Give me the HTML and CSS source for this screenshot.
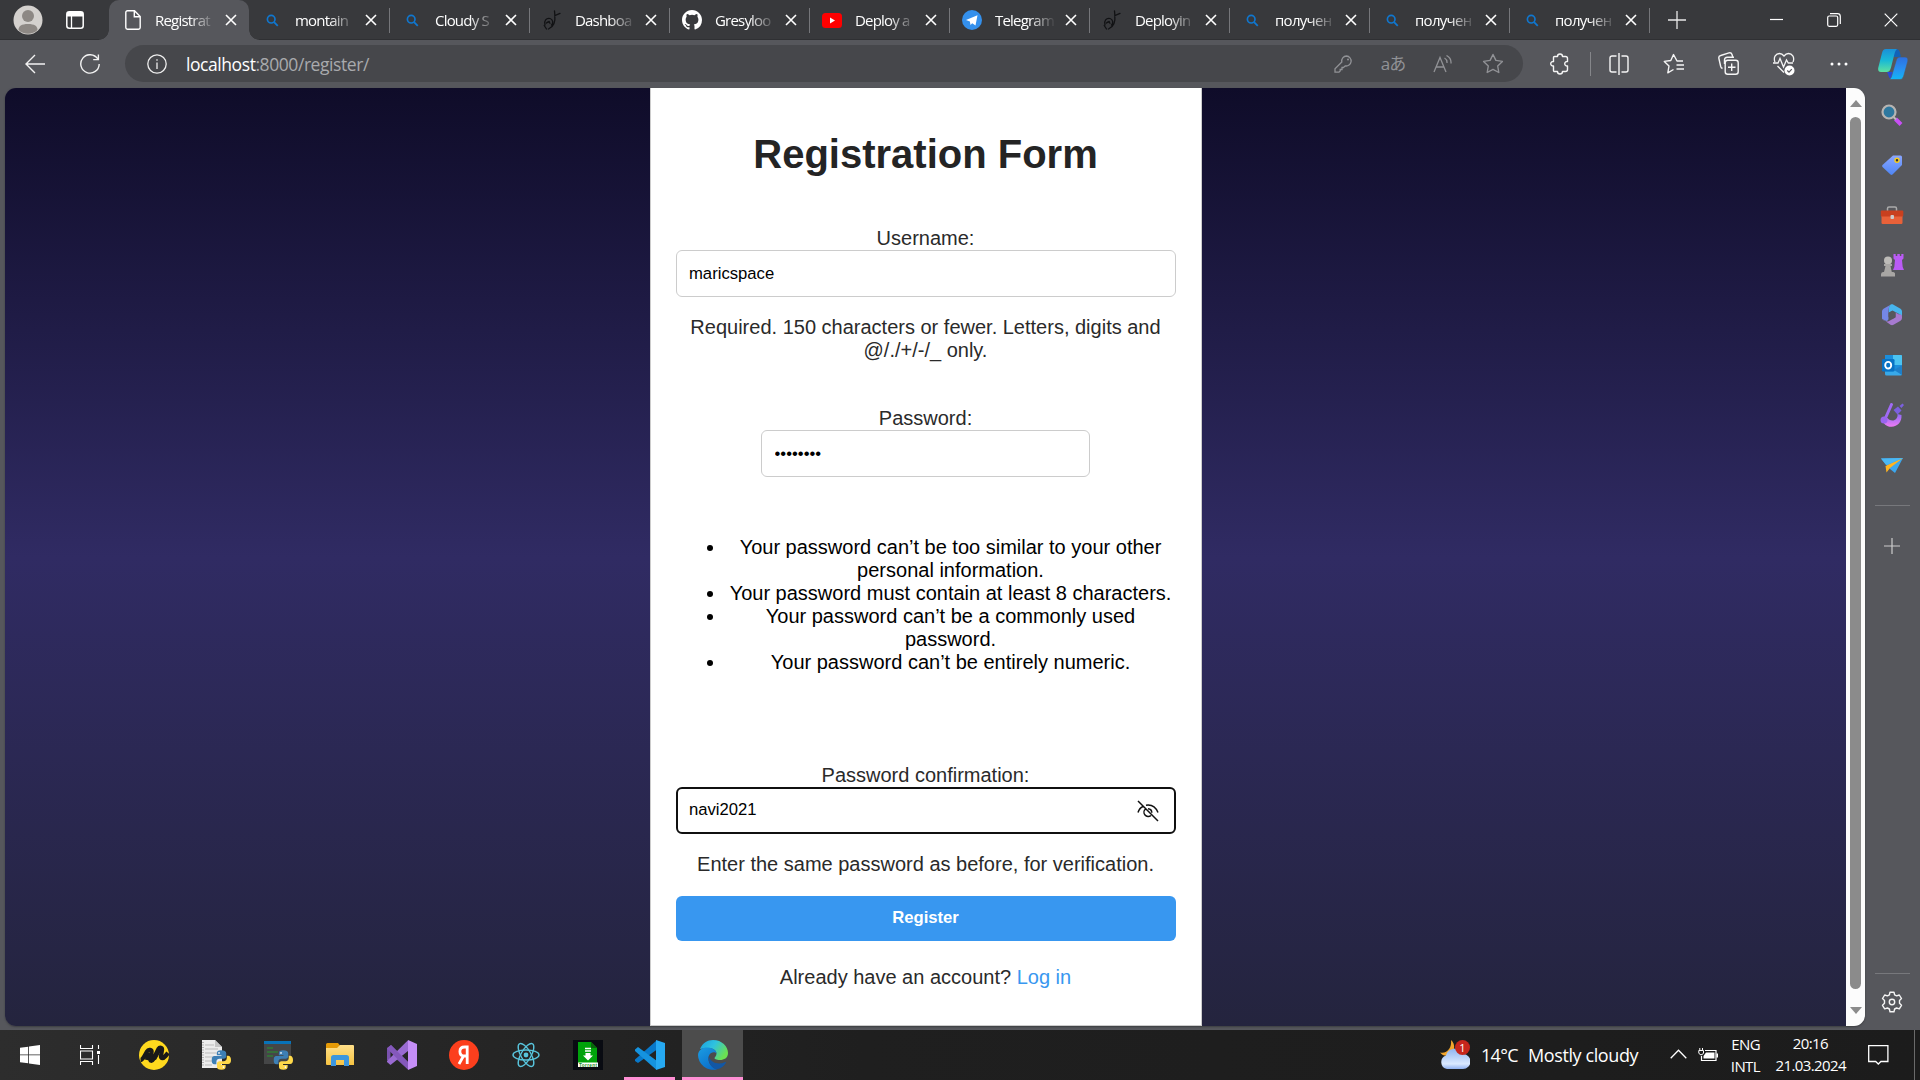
FILE: index.html
```html
<!DOCTYPE html>
<html lang="en">
<head>
<meta charset="utf-8">
<title>Registration Form</title>
<link rel="stylesheet" href="styles.css">
</head>
<body>
<svg class="sprite" width="0" height="0" aria-hidden="true">
  <defs>
    <linearGradient id="gCopA" x1="0" y1="0" x2="0" y2="1"><stop offset="0" stop-color="#1a8fd8"/><stop offset=".5" stop-color="#19b9d6"/><stop offset="1" stop-color="#5fe0a0"/></linearGradient>
    <linearGradient id="gCopB" x1="0" y1="0" x2="0" y2="1"><stop offset="0" stop-color="#2d6fe0"/><stop offset=".5" stop-color="#2a8df0"/><stop offset="1" stop-color="#12b6f5"/></linearGradient>
    <linearGradient id="gTag" x1="0" y1="0" x2="0" y2="1"><stop offset="0" stop-color="#8aa6ff"/><stop offset="1" stop-color="#4f86f5"/></linearGradient>
    <linearGradient id="gPurple" x1="0" y1="0" x2="0" y2="1"><stop offset="0" stop-color="#8d6bf5"/><stop offset="1" stop-color="#ee7bf3"/></linearGradient>
    <linearGradient id="gEdgeA" x1="0" y1="0" x2="1" y2="0.5"><stop offset="0" stop-color="#1aa0e0"/><stop offset=".5" stop-color="#2fc2df"/><stop offset="1" stop-color="#6be052"/></linearGradient>
    <linearGradient id="gEdgeB" x1="0" y1="0" x2="0.6" y2="1"><stop offset="0" stop-color="#1b9de2"/><stop offset="1" stop-color="#0b6fcb"/></linearGradient>
    <linearGradient id="gCloud" x1="0" y1="0" x2="0" y2="1"><stop offset="0" stop-color="#8fb4f0"/><stop offset=".75" stop-color="#dbe9ff"/><stop offset="1" stop-color="#8fb0f0"/></linearGradient>
    <linearGradient id="gFolder" x1="0" y1="0" x2="0" y2="1"><stop offset="0" stop-color="#ffe08a"/><stop offset="1" stop-color="#f6c342"/></linearGradient>
  </defs>
  <symbol id="close" viewBox="0 0 12 12"><path d="M1 1l10 10M11 1L1 11" stroke="currentColor" stroke-width="1.6" fill="none"/></symbol>
  <symbol id="search" viewBox="0 0 14 14"><circle cx="5.6" cy="5.6" r="4.1" fill="none" stroke="#1077cf" stroke-width="1.8"/><path d="M8.7 8.7l4 4" stroke="#1077cf" stroke-width="2"/></symbol>
  <symbol id="spoon" viewBox="0 0 18 20"><g fill="none" stroke="#111214" stroke-width="1.3" stroke-linecap="round"><path d="M11.500 1l.4 4.500L17 3.400M11.800 5.500c.6 5-.6 11-6.300 13.500M2 15c-1.500-4 1.500-7.500 5-6.500 3 .8 3.500 4.500 1.500 6.500"/><path d="M3.500 13c1.500-1.500 3-1.200 3.500.300M1.200 15.500l2.300 3.500M6 11.500l.5.500"/></g></symbol>
  <symbol id="python" viewBox="0 0 20 20"><path fill="#3d7fb5" d="M9.800 0C6.500 0 5.500 1 5.500 3v2h4.700v.8H3C1 5.800 0 7.500 0 10s1 4.300 3 4.300h2v-2.300c0-2 1.400-3.200 3.200-3.200h4.300c1.500 0 2.600-1.100 2.600-2.600V3c0-2-1.800-3-5.300-3z"/><path fill="#ffd94a" d="M10.200 20c3.300 0 4.300-1 4.300-3v-2H9.800v-.8H17c2 0 3-1.700 3-4.200s-1-4.300-3-4.300h-1.300V8c0 2-1.400 3.200-3.200 3.200H8.200c-1.500 0-2.600 1.100-2.600 2.600V17c0 2 1.200 3 4.600 3z"/><circle cx="7.700" cy="2.800" r=".9" fill="#fff"/><circle cx="12.300" cy="17.200" r=".9" fill="#fff"/></symbol>
</svg>

<div class="browser">
  <header class="tabstrip">
    <div class="profile">
      <svg width="30" height="30" viewBox="0 0 30 30"><circle cx="15" cy="15" r="14.500" fill="#d4d1ce"/><circle cx="15" cy="11" r="6" fill="#8d8884"/><path d="M5.500 25c0-4 3-6 9.500-6s9.500 2 9.500 6a14 14 0 0 1-19 0z" fill="#8d8884"/></svg>
    </div>
    <div class="workspaces">
      <svg width="18" height="18" viewBox="0 0 18 18"><rect x=".8" y=".8" width="16.400" height="16.400" rx="2.500" fill="none" stroke="#fff" stroke-width="1.500"/><path d="M1 1h16v4.500H1z" fill="#fff"/><path d="M5.500 5v12" stroke="#fff" stroke-width="1.300"/></svg>
    </div>
    <div class="tab active"><span class="favicon"><svg width="16" height="20" viewBox="0 0 16 20"><path d="M2.500.8h7L15.200 6.500v11a1.700 1.700 0 0 1-1.700 1.700h-11A1.700 1.700 0 0 1 .8 17.500v-15A1.700 1.700 0 0 1 2.500.8zM9.300.8v6h5.900" fill="none" stroke="#fff" stroke-width="1.400"/></svg></span><span class="tab-title">Registrat</span><svg class="x"><use href="#close"/></svg></div>
    <div class="tab"><span class="favicon"><svg width="13" height="13"><use href="#search"/></svg></span><span class="tab-title">montain</span><svg class="x"><use href="#close"/></svg></div>
    <div class="tab"><span class="favicon"><svg width="13" height="13"><use href="#search"/></svg></span><span class="tab-title">Cloudy S</span><svg class="x"><use href="#close"/></svg></div>
    <div class="tab"><span class="favicon"><svg width="18" height="20"><use href="#spoon"/></svg></span><span class="tab-title">Dashboa</span><svg class="x"><use href="#close"/></svg></div>
    <div class="tab"><span class="favicon"><svg width="20" height="20" viewBox="0 0 16 16"><path fill="#fff" d="M8 0C3.580 0 0 3.580 0 8c0 3.540 2.290 6.530 5.470 7.590.4.070.55-.17.55-.38 0-.19-.01-.82-.01-1.490-2.010.37-2.530-.49-2.690-.94-.09-.23-.48-.94-.82-1.130-.28-.15-.68-.52-.01-.53.63-.01 1.080.58 1.230.82.72 1.210 1.870.87 2.330.66.07-.52.28-.87.51-1.070-1.780-.2-3.640-.89-3.640-3.950 0-.87.31-1.590.82-2.150-.08-.2-.36-1.020.08-2.120 0 0 .67-.21 2.200.82a7.600 7.600 0 0 1 4 0c1.530-1.040 2.200-.82 2.200-.82.44 1.100.16 1.920.08 2.120.51.56.82 1.270.82 2.150 0 3.070-1.870 3.750-3.650 3.950.29.25.54.73.54 1.480 0 1.070-.01 1.930-.01 2.200 0 .21.15.46.55.38A8 8 0 0 0 16 8c0-4.420-3.580-8-8-8z"/></svg></span><span class="tab-title">Gresyloo</span><svg class="x"><use href="#close"/></svg></div>
    <div class="tab"><span class="favicon"><svg width="20" height="15" viewBox="0 0 20 15"><rect width="20" height="15" rx="3.500" fill="#f00"/><path d="M8 4.500v6l5-3z" fill="#fff"/></svg></span><span class="tab-title">Deploy a</span><svg class="x"><use href="#close"/></svg></div>
    <div class="tab"><span class="favicon"><svg width="20" height="20" viewBox="0 0 20 20"><circle cx="10" cy="10" r="10" fill="#3490ec"/><path d="M4 10l11.500-4.800-2 10.300-3.300-2.300-1.700 1.800-.6-3.500z" fill="#fff"/></svg></span><span class="tab-title">Telegram</span><svg class="x"><use href="#close"/></svg></div>
    <div class="tab"><span class="favicon"><svg width="18" height="20"><use href="#spoon"/></svg></span><span class="tab-title">Deployin</span><svg class="x"><use href="#close"/></svg></div>
    <div class="tab"><span class="favicon"><svg width="13" height="13"><use href="#search"/></svg></span><span class="tab-title cyr">получен</span><svg class="x"><use href="#close"/></svg></div>
    <div class="tab"><span class="favicon"><svg width="13" height="13"><use href="#search"/></svg></span><span class="tab-title cyr">получен</span><svg class="x"><use href="#close"/></svg></div>
    <div class="tab"><span class="favicon"><svg width="13" height="13"><use href="#search"/></svg></span><span class="tab-title cyr">получен</span><svg class="x"><use href="#close"/></svg></div>
    <div class="new-tab"><svg width="18" height="20" viewBox="0 0 18 20"><path d="M9 1v18M0 10h18" stroke="#e8e8e8" stroke-width="1.300"/></svg></div>
    <div class="window-buttons">
      <span><svg width="13" height="13" viewBox="0 0 13 13"><path d="M0 6.500h13" stroke="#fff" stroke-width="1.200"/></svg></span>
      <span><svg width="14" height="14" viewBox="0 0 14 14"><rect x=".7" y="3" width="10" height="10.300" rx="1.500" fill="none" stroke="#fff" stroke-width="1.200"/><path d="M3 .7h7.500a2.800 2.800 0 0 1 2.800 2.800V11" fill="none" stroke="#fff" stroke-width="1.200"/></svg></span>
      <span><svg width="14" height="14" viewBox="0 0 14 14"><path d="M.7.7l12.600 12.600M13.300.7L.7 13.300" stroke="#fff" stroke-width="1.200"/></svg></span>
    </div>
  </header>

  <div class="toolbar">
    <div class="nav-buttons">
      <svg width="20" height="20" viewBox="0 0 20 20"><path d="M20 10H1M10 1l-9 9 9 9" fill="none" stroke="#f2f2f2" stroke-width="1.400"/></svg>
      <svg width="20" height="20" viewBox="0 0 20 20"><path d="M17.800 5A9.200 9.200 0 1 0 19.200 10M18.400.5V5.600H13.200" fill="none" stroke="#f2f2f2" stroke-width="1.400"/></svg>
    </div>
    <div class="address">
      <svg width="20" height="20" viewBox="0 0 20 20"><circle cx="10" cy="10" r="9.200" fill="none" stroke="#eee" stroke-width="1.300"/><path d="M10 8.500v6.500M10 5.200v1.500" stroke="#eee" stroke-width="1.300"/></svg>
      <span class="url"><b>localhost</b>:8000/register/</span>
      <span class="addr-icon"><svg width="19" height="18" viewBox="0 0 19 18"><path d="M12.500 1a5 5 0 1 1-1.300 9.900L9.500 12.500H8v2H6.200V16L5 17.200H1V13.700L7.800 7A5 5 0 0 1 12.500 1z" fill="none" stroke="#919296" stroke-width="1.300"/><circle cx="14" cy="4.600" r="1" fill="#919296"/></svg></span>
      <span class="addr-icon translate">aあ</span>
      <span class="addr-icon"><svg width="20" height="18" viewBox="0 0 20 18"><path d="M1 17L7 2.500 13 17M3.200 12h7.600M11.500 3c1.700 1 2.700 2.800 2.500 5M13.500.5c3 1.500 4.800 4.500 4.500 8" fill="none" stroke="#919296" stroke-width="1.300"/></svg></span>
      <span class="addr-icon"><svg width="22" height="21" viewBox="0 0 22 21"><path d="M11 1.500l2.900 5.900 6.500 1-4.700 4.600 1.100 6.500L11 16.400l-5.800 3.100 1.100-6.500L1.600 8.400l6.500-1z" fill="none" stroke="#919296" stroke-width="1.400" stroke-linejoin="round"/></svg></span>
    </div>
    <span class="ext-button"><svg width="19" height="23" viewBox="0 0 19 23"><path d="M4.500 4.500h3a2.500 2.500 0 1 1 5 0H15.500A2 2 0 0 1 17.500 6.500V9.500a2.300 2.300 0 1 0 0 4.500V17.500a2 2 0 0 1-2 2H12.500a2.500 2.500 0 1 1-5 0H4.500a1 1 0 0 1-1-1V14a2.300 2.300 0 1 1 0-4.500V5.500a1 1 0 0 1 1-1z" fill="none" stroke="#f5f5f5" stroke-width="1.400" stroke-linejoin="round"/></svg></span>
    <span class="divider"></span>
    <span class="tool"><svg width="20" height="22" viewBox="0 0 20 22"><path d="M7.500 3H3A2 2 0 0 0 1 5v12a2 2 0 0 0 2 2h4.500M12.500 3H17a2 2 0 0 1 2 2v12a2 2 0 0 1-2 2h-4.500M10 0v22" fill="none" stroke="#f5f5f5" stroke-width="1.400"/></svg></span>
    <span class="tool"><svg width="22" height="22" viewBox="0 0 22 22"><path d="M20 8h-6l-3.500-6.500L7.800 7.500 1.300 8.400 6 13l-1.200 6.800 5.700-3.300M13.500 12H21M13.500 16H21" fill="none" stroke="#f5f5f5" stroke-width="1.400" stroke-linejoin="round"/></svg></span>
    <span class="tool"><svg width="21" height="23" viewBox="0 0 21 23"><rect x="7.200" y="8.200" width="13" height="14" rx="2.500" fill="none" stroke="#f5f5f5" stroke-width="1.400"/><path d="M13.700 11.500v7.500M10 15.200h7.500M4.500 16.500c-1-.5-1.500-1-1.800-2L.9 6.500a2.500 2.500 0 0 1 1.800-3L11 .9a2.500 2.500 0 0 1 3 1.600l.8 2.700M6.500 12V8a2.800 2.800 0 0 1 2.800-2.800H16" fill="none" stroke="#f5f5f5" stroke-width="1.400"/></svg></span>
    <span class="tool"><svg width="22" height="24" viewBox="0 0 22 24"><path d="M2 10C0 5 3 1.500 6.500 1.500 8.500 1.500 10 2.700 11 4c1-1.300 2.500-2.500 4.500-2.500C19 1.500 22 5 20 10M4.500 14l6.500 6.500M0 11h5l2-4.500L10.500 15l3-7 1.800 3H20" fill="none" stroke="#f5f5f5" stroke-width="1.300"/><circle cx="16.500" cy="18.500" r="5" fill="#fff"/><path d="M14.300 18.500l1.700 1.700 2.800-3" fill="none" stroke="#55565b" stroke-width="1.200"/></svg></span>
    <span class="tool"><svg width="18" height="4" viewBox="0 0 18 4"><g fill="#fff"><circle cx="2" cy="2" r="1.500"/><circle cx="9" cy="2" r="1.500"/><circle cx="16" cy="2" r="1.500"/></g></svg></span>
    <span class="copilot"><svg width="30" height="32" viewBox="0 0 30 32"><path d="M14 31c-2.500 0-3-1.500-4-5l-1-2h8z" fill="#2949d6"/><path d="M16 1h2c2.500 0 3.300 1.500 4 4l1 4h-7z" fill="#1262b8"/><path d="M8 1h11c-1.500 1-2 3-2.700 5.500L13 19.500c-.8 3-2 4.500-4.500 4.500H3c-2.500 0-3.300-2-2.700-4.500L4 5c.7-2.500 1.700-4 4-4z" fill="url(#gCopA)"/><path d="M22 31.500H11.500c1.500-1 2-3 2.700-5.500L18 13c.7-2.800 1.700-4 4-4h5c2.500 0 3.300 2 2.700 4.500L26 27c-.7 2.500-1.700 4.500-4 4.500z" fill="url(#gCopB)" stroke="#56575c" stroke-width=".6"/></svg></span>
  </div>

  <div class="workarea">
    <main class="viewport">
      <div class="page">
        <form class="card">
          <h1>Registration Form</h1>
          <div class="field username">
            <label>Username:</label>
            <input class="wide" type="text" value="maricspace">
            <p>Required. 150 characters or fewer. Letters, digits and @/./+/-/_ only.</p>
          </div>
          <div class="field password">
            <label>Password:</label>
            <input class="narrow" type="password" value="12345678">
          </div>
          <ul>
            <li>Your password can’t be too similar to your other personal information.</li>
            <li>Your password must contain at least 8 characters.</li>
            <li>Your password can’t be a commonly used password.</li>
            <li>Your password can’t be entirely numeric.</li>
          </ul>
          <div class="field confirm">
            <label>Password confirmation:</label>
            <div class="focused"><span>navi2021</span><svg width="22" height="22" viewBox="0 0 22 22"><path d="M1 1l20 20M1 12.500C2 9.500 3.500 7.500 6 6.500M9 5.200c6-1 10 2.500 12 7.300M8.500 9a4.200 4.200 0 1 0 5.500 6.500M11 8.700a4 4 0 0 1 3.800 4" fill="none" stroke="#111" stroke-width="1.500"/></svg></div>
            <p>Enter the same password as before, for verification.</p>
          </div>
          <button type="button">Register</button>
          <div class="login">Already have an account? <a>Log in</a></div>
        </form>
      </div>
      <div class="scrollbar"><i class="up"></i><i class="thumb"></i><i class="down"></i></div>
    </main>
    <aside class="sidebar">
      <span><svg width="22" height="22" viewBox="0 0 22 22"><path d="M14.500 15l5.500 5.500" stroke="#c84ff5" stroke-width="4"/><path d="M12 12.500l3 3" stroke="#bbb" stroke-width="2"/><circle cx="8" cy="8" r="6.500" fill="#2e789f" stroke="#b7b4b2" stroke-width="2.200"/></svg></span>
      <span><svg width="22" height="22" viewBox="0 0 22 22"><path d="M12 1.500h7.500A1.500 1.500 0 0 1 21 3v8L11.500 20.500a1.500 1.500 0 0 1-2 0L1.500 13a1.500 1.500 0 0 1 0-2z" fill="url(#gTag)"/><circle cx="16" cy="6.300" r="2" fill="#333" stroke="#f6cb1f" stroke-width="1.500"/></svg></span>
      <span><svg width="24" height="18" viewBox="0 0 24 18"><path d="M7.500 5V2.500A1.500 1.500 0 0 1 9 1h6a1.500 1.500 0 0 1 1.500 1.500V5" fill="none" stroke="#aaa" stroke-width="1.500"/><rect x="1.500" y="9" width="21" height="9" rx="1.200" fill="#e86139"/><rect x=".8" y="4.500" width="22.500" height="6" rx="1" fill="#c9401f"/><rect x="10.500" y="9" width="3.500" height="4" rx="1" fill="#ccc"/></svg></span>
      <span><svg width="24" height="24" viewBox="0 0 24 24"><path d="M13.500 1h2.200v2h1.600V1h2.500v2h1.500V1h2.200v4.500l-1.500 1.500.7 7 1.300 3H13l1.300-3 .7-7-1.500-1.500z" fill="#ba5bf5"/><circle cx="8" cy="7.500" r="4" fill="#bdbbb8"/><path d="M4 11h8v2h-1.500l1.300 6H13a2 2 0 0 1 2 2.500V23.500H1V21.500A2.500 2.500 0 0 1 3 19h1l1.500-6H4z" fill="#a8a6a4"/></svg></span>
      <span><svg width="22" height="22" viewBox="0 0 22 22"><path d="M10 .5L2.500 4.800A3 3 0 0 0 1 7.500v7.200l3 1.800c2 1 3.500 0 3.500-2V8.500c0-4 .5-6.500 2.500-8z" fill="#7487e6"/><path d="M9.500.8c1-.6 2-.6 3 0l7 4A3 3 0 0 1 21 7.500v5.700c0-1.200-.8-2-2-2.700l-7.500-4L8 8.500C7.500 4.500 8 2 9.500.8z" fill="#47b5ee"/><path d="M1 14.700l8.500 6a3 3 0 0 0 3 0l7-4A3 3 0 0 0 21 14v-1.500c0-1.500-1.500-2.500-3-2l-3.500-2v5L9 16.500c-2 1.500-5.500 1.500-8-1.800z" fill="#a67ad0"/><path d="M11 7l3.500 2v4L11 15l-3.500-2V9z" fill="#56575c"/></svg></span>
      <span><svg width="22" height="22" viewBox="0 0 22 22"><path d="M4 1h16a1 1 0 0 1 1 1v18H4z" fill="#1b8edb"/><path d="M12 1h8a1 1 0 0 1 1 1v9h-9z" fill="#4bc3f1"/><path d="M4 17.500h8L21 11v9a1.500 1.500 0 0 1-1.500 1.500h-14A1.500 1.500 0 0 1 4 20z" fill="#38a9e9"/><path d="M13 16l8 5V11z" fill="#1d7fc9"/><rect x="1" y="5" width="12.500" height="12.500" rx="1.300" fill="#0872c4"/><ellipse cx="7.200" cy="11.200" rx="3" ry="3.300" fill="none" stroke="#fff" stroke-width="1.900"/></svg></span>
      <span><svg width="24" height="24" viewBox="0 0 24 24"><path d="M2 16c1 5 5 8 9.500 7.800C17.500 23.500 22 19 21.500 12l-4-1c.5 4-2 6.500-5 6.500-2.500 0-4-1-5-2.500z" fill="url(#gPurple)"/><path d="M11.500 1.500L5.500 15" stroke="#a06af5" stroke-width="3" stroke-linecap="round"/><circle cx="4" cy="17" r="3.500" fill="#9965ef"/><path d="M13.500 7l4.500-3.500 3.500 4-4 4zM19.500 3l3-2.500L24 2l-2.500 3z" fill="#7b60df"/></svg></span>
      <span><svg width="22" height="17" viewBox="0 0 22 17"><path d="M0 1.500L22 1l-8 15-5-4z" fill="#3ca7ee"/><path d="M22 1L4.500 9l1 6.500L9 11z" fill="#ffb41f"/><path d="M0 1.500L22 1 5 8z" fill="#4bb8f4"/></svg></span>
      <hr>
      <span class="add"><svg width="16" height="16" viewBox="0 0 16 16"><path d="M8 0v16M0 8h16" stroke="#ccc" stroke-width="1.200"/></svg></span>
      <hr class="lower">
      <span class="gear"><svg width="22" height="22" viewBox="0 0 22 22"><path d="M9 1.200h4l.6 2.700 2 1 2.700-.9 2.200 3.500-2 2v2.800l2 2-2.200 3.500-2.700-.8-2 1L13 20.800H9L8.400 18l-2-1-2.700.8L1.500 14.300l2-2V9.500l-2-2L3.700 4l2.700.9 2-1z" fill="none" stroke="#f5f5f5" stroke-width="1.400" stroke-linejoin="round"/><circle cx="11" cy="11" r="2.700" fill="none" stroke="#f5f5f5" stroke-width="1.400"/></svg></span>
    </aside>
  </div>
</div>

<footer class="taskbar">
  <nav class="apps">
    <span class="start"><svg width="20" height="20" viewBox="0 0 20 20"><path fill="#fff" d="M0 2.800L8.200 1.700V9.500H0zM9 1.500L20 0v9.500H9zM0 10.300h8.200v7.900L0 17.200zM9 10.300h11V20L9 18.400z"/></svg></span>
    <span class="start"><svg width="20" height="20" viewBox="0 0 20 20"><path d="M.5 0v3.500h12V0M.5 20v-3.500h12V20M.5 6h12v8H.5zM18.500 0v4M18.500 10v9" fill="none" stroke="#fff" stroke-width="1.100"/><path d="M17 6h3v3h-3z" fill="#fff"/></svg></span>
    <span><svg width="30" height="30" viewBox="0 0 30 30"><circle cx="15" cy="15" r="15" fill="#ffd91e"/><path d="M1.500 20C4 20 6 15 8 11.500c1.500-2.500 5-2 4.500 1l-1 5.500c-.5 3.500 1.500 3.500 3 1L19.500 9c1.300-2 3.800-1.500 3.500 1l-1 6c-.4 2.500 2 3 4.500 0l2.500-3" fill="none" stroke="#191919" stroke-width="4.300" stroke-linejoin="round"/><path d="M10 13L8 20M20 10l-5 9" stroke="#191919" stroke-width="4.500"/></svg></span>
    <span><svg width="30" height="30" viewBox="0 0 30 30"><path d="M1 0h13l7 7v21H1z" fill="#ececec"/><path d="M4 5h9M4 9h13M4 13h12M4 17h8M4 21h7M4 25h7" stroke="#bbb"/><path d="M14 0l7 7h-7z" fill="#c5c5c5"/><path d="M2 2v25" stroke="#777" stroke-dasharray="1 1.500"/><use href="#python" x="10.500" y="10" width="19.500" height="20"/></svg></span>
    <span><svg width="30" height="30" viewBox="0 0 30 30"><path d="M1 1h27v23H1z" fill="#454647"/><path d="M1 1h27v3H1z" fill="#0872b8"/><path d="M4 8h6M4 12h11M4 16h6" stroke="#26962c" stroke-width="1.100"/><use href="#python" x="10.500" y="10" width="19.500" height="20"/></svg></span>
    <span><svg width="30" height="30" viewBox="0 0 30 30"><path d="M1 4.500A1.500 1.500 0 0 1 2.500 3H13l2 2.500-2 2.500H1z" fill="#e59a06"/><path d="M1 8h11l3-3h13a1 1 0 0 1 1 1v19H2a1 1 0 0 1-1-1z" fill="url(#gFolder)"/><path d="M6 26V17.500A2.500 2.500 0 0 1 8.500 15h13A2.500 2.500 0 0 1 24 17.500V26h-5v-6h-8v6z" fill="#3c97df"/></svg></span>
    <span><svg width="30" height="30" viewBox="0 0 30 30"><path d="M0 8l4-3 17 17v7.500L7 17l-4 5-3-2zM3.500 11v8l4-4z" fill="#7a52ae" fill-rule="evenodd"/><path d="M0 21L21 .3V11L3.500 25 0 22z" fill="#9a6bd2"/><path d="M0 8.500L4 5l17 17v7.500z" fill="#8458bb"/><path d="M21 0l9 4v22l-9 4z" fill="#c58ef7"/></svg></span>
    <span><svg width="30" height="30" viewBox="0 0 30 30"><circle cx="15" cy="15" r="15" fill="#fc3f1d"/><path d="M18.200 24V7h-2.500c-3 0-4.800 1.700-4.800 4.500 0 3 1.700 4.500 4.300 4.500h3M14.500 16L10 24" fill="none" stroke="#fff" stroke-width="2.800"/></svg></span>
    <span><svg width="28" height="28" viewBox="-14 -14 28 28"><g fill="none" stroke="#58c4dc" stroke-width="1.400"><ellipse rx="13" ry="5"/><ellipse rx="13" ry="5" transform="rotate(60)"/><ellipse rx="13" ry="5" transform="rotate(120)"/></g><circle r="2.400" fill="#58c4dc"/></svg></span>
    <span><svg width="30" height="30" viewBox="0 0 30 30"><path d="M0 0h30v30H0z" fill="#090b12"/><path d="M5 2h13l6 6v19H5z" fill="#00a20b"/><path d="M18 2l6 6h-6z" fill="#08640b"/><path d="M12 8.500h6M12 11h6" stroke="#fff" stroke-width="1.300"/><path d="M12.500 13h5v2.500h2.500L15 20.500l-5-5h2.500z" fill="#fff"/><path d="M5 22.500h20V27H5z" fill="#fff"/><text x="6" y="26.500" font-size="4.700" font-weight="700" font-family="Liberation Sans, sans-serif" textLength="18" fill="#178d1b">Torrent</text></svg></span>
    <span class="running"><svg width="30" height="30" viewBox="0 0 30 30"><path d="M0 19.500L21 1l1 8.500L3 23 0 21z" fill="#0878c9"/><path d="M0 9.500L3 7l19 14-1 8.500L0 11z" fill="#1593df"/><path d="M21 0l9 3v24l-9 3z" fill="#26a9f2"/></svg></span>
    <span class="running current"><svg width="30" height="30" viewBox="0 0 30 30"><path d="M2 9C4.500 3 9.500 0 15 0c9 0 15 6.500 15 13 0 5-4 7-8 7-4 0-5.500-1.200-5.500-2 0-.7 2-1.500 2-4.500 0-3-3-5.500-8.500-5.500C6.500 8 4 8.500 2 9z" fill="url(#gEdgeA)"/><path d="M0 15C.5 9.500 5 7 10 7.500c5 .5 8.500 3 8.500 6-1.500-2-6-1.500-7.500 2-2 5 1 11.500 8 13.800A15 15 0 0 1 0 15z" fill="url(#gEdgeB)"/><path d="M10.800 16c-1.300 6 3 13 8.200 13.300 4-.8 7-3.300 8.800-6.300.5-.8-.3-1.200-1-.8-6 2.800-14.500.8-16-6.200z" fill="#1257a5"/></svg></span>
  </nav>
  <div class="tray">
    <div class="weather"><svg width="30" height="30" viewBox="0 0 30 30"><path d="M11 0c5 4 4 13-2 15.500-4 1-7-.5-9-3C7 14 12 8 11 0z" fill="#f3a62c"/><path d="M7 29a7 7 0 0 1-1-13.500 9 9 0 0 1 17-1.500A7.500 7.500 0 0 1 23 29z" fill="url(#gCloud)"/><circle cx="22.500" cy="7.500" r="7.500" fill="#c6261c"/><text x="22.500" y="11.500" text-anchor="middle" font-size="11" font-family="Open Sans, sans-serif" fill="#fff">1</text></svg>
      <span class="temp">14°C</span><span class="cond">Mostly cloudy</span></div>
    <svg class="chevron" width="17" height="10" viewBox="0 0 17 10"><path d="M.7 9.300l7.800-8 7.800 8" fill="none" stroke="#fff" stroke-width="1.300"/></svg>
    <svg class="battery" width="20" height="14" viewBox="0 0 20 14"><path d="M7 2.500h11v10H3.500V8" fill="none" stroke="#fff" stroke-width="1.200"/><path d="M8 4.500h8.500v6H5.500V8z" fill="#fff"/><path d="M18.500 5.500H20v4h-1.500z" fill="#fff"/><path d="M.8 2.500h4.700V5L4.200 6.700H2.100L.8 5zM1.800 0v2.500M4.500 0v2.500" fill="none" stroke="#fff" stroke-width="1"/></svg>
    <div class="lang"><span>ENG</span><span>INTL</span></div>
    <div class="clock"><span>20:16</span><span>21.03.2024</span></div>
    <svg class="notice" width="21" height="21" viewBox="0 0 21 21"><path d="M.7.7h19.200v15.800h-7L10.300 19l-2.600-2.500h-7z" fill="none" stroke="#fff" stroke-width="1.300"/></svg>
    <div class="peek"></div>
  </div>
</footer>
</body>
</html>
```
FILE: styles.css
```css
* { box-sizing: border-box; }
body {
  margin: 0;
  width: 1920px;
  height: 1080px;
  overflow: hidden;
  display: flex;
  flex-direction: column;
  font-family: "Open Sans", "Noto Sans", sans-serif;
  background: #56575c;
  color: #fff;
}
svg { display: block; flex: none; }
.sprite { position: absolute; }

.browser { height: 1030px; display: flex; flex-direction: column; }

/* Tab strip */
.tabstrip {
  height: 40px;
  flex: none;
  display: flex;
  align-items: center;
  background: #38393c;
  box-shadow: inset 0 -1px #2f3033;
}
.profile { width: 56px; display: flex; justify-content: center; }
.workspaces { width: 53px; padding-left: 10px; }
.tab {
  position: relative;
  width: 140px;
  height: 40px;
  flex: none;
  display: flex;
  align-items: center;
  padding-left: 11px;
  font-size: 15px;
}
.tab::after {
  content: "";
  position: absolute;
  right: -1px;
  top: 8px;
  width: 1px;
  height: 25px;
  background: #75767a;
}
.tab.active { background: #56575c; border-radius: 10px 10px 0 0; }
.tab.active::after, .tab.active::before {
  content: "";
  width: 10px;
  height: 10px;
  top: 30px;
  position: absolute;
}
.tab.active::after { right: -10px; background: radial-gradient(circle at 10px 0, #38393c 9.5px, #56575c 10px); }
.tab.active::before { left: -10px; background: radial-gradient(circle at 0 0, #38393c 9.5px, #56575c 10px); }
.favicon { width: 26px; height: 20px; display: flex; justify-content: center; align-items: center; }
.tab:not(.active) .favicon { padding-right: 2px; }
.tab-title {
  width: 62px;
  margin-left: 9px;
  white-space: nowrap;
  letter-spacing: -0.8px;
  line-height: 22px;
  -webkit-mask-image: linear-gradient(90deg, #000 55%, transparent 98%);
  mask-image: linear-gradient(90deg, #000 55%, transparent 98%);
}
.tab-title.cyr { letter-spacing: -0.7px; }
.x { width: 12px; height: 12px; margin-left: 8px; color: #fff; }
.new-tab { width: 56px; display: flex; justify-content: center; }
.window-buttons { display: flex; margin-left: auto; }
.window-buttons span { width: 57.5px; display: flex; justify-content: center; }

/* Toolbar */
.toolbar { height: 48px; flex: none; display: flex; align-items: center; background: #56575c; padding-bottom: 1px; }
.nav-buttons { width: 125px; padding-left: 25px; display: flex; gap: 35px; }
.address {
  width: 1398px;
  height: 37px;
  border-radius: 19px;
  background: #46474b;
  display: flex;
  align-items: center;
  padding: 0 5px 0 22px;
}
.url { flex: 1; margin-left: 19px; font-size: 17.5px; letter-spacing: -0.43px; color: #a9aaad; line-height: 24px; }
.url b { font-weight: 400; color: #fff; }
.addr-icon { width: 50px; display: flex; justify-content: center; }
.translate { font: 17px/24px "Open Sans", "Noto Sans CJK JP", sans-serif; color: #919296; letter-spacing: -1px; }
.ext-button { width: 67px; padding-left: 27px; }
.divider { width: 1px; height: 24px; background: #85868a; }
.tool { width: 55.2px; display: flex; justify-content: center; }
.copilot { width: 53px; display: flex; justify-content: center; }

/* Page viewport */
.workarea { height: 942px; display: flex; padding-left: 5px; }
.viewport {
  width: 1860px;
  height: 938px;
  flex: none;
  display: flex;
  border-radius: 11px;
  overflow: hidden;
  box-shadow: 0 1px 2px #3c3d41;
}
.page {
  width: 1841px;
  display: flex;
  justify-content: center;
  background: linear-gradient(#0f0c29, #302b63 50%, #24243e);
}
.card {
  width: 552px;
  height: 938px;
  padding: 0 25px;
  border: solid #ccc;
  border-width: 0 1px 1px;
  background: #fff;
  color: #2a2a2a;
  font: 20px/23px "Liberation Sans", Arial, sans-serif;
  text-align: center;
}
.card h1 { margin: 43px 0 0; font-size: 40px; line-height: 46px; color: #242424; }
.card p { margin: 19px 0 0; }
.field { display: flex; flex-direction: column; align-items: center; }
.username { margin-top: 50px; }
.password { margin-top: 45px; }
.card input, .focused {
  height: 47px;
  padding: 0 12.5px;
  border: 1px solid #ccc;
  border-radius: 6px;
  background: #fff;
  color: #000;
  font: 16.667px "Liberation Sans", Arial, sans-serif;
  outline: none;
}
.wide { width: 500px; }
.narrow { width: 329px; }
.card ul { margin: 59px 0 0; padding-left: 50px; color: #000; }
.confirm { margin-top: 90px; }
.focused {
  width: 500px;
  border: 2px solid #101010;
  padding: 0 15px 2px 11.5px;
  display: flex;
  align-items: center;
  justify-content: space-between;
}
.focused svg { margin-top: 2px; }
.card button {
  display: block;
  width: 500px;
  height: 45px;
  margin: 20px 0 0;
  padding: 0 0 2px;
  border: 0;
  border-radius: 6px;
  background: #3897f0;
  color: #fff;
  font: bold 16.667px "Liberation Sans", Arial, sans-serif;
}
.login { margin-top: 25px; }
.login a { color: #3897f0; }

.scrollbar { width: 19px; background: #fcfcfc; display: flex; flex-direction: column; align-items: center; padding-top: 12px; }
.up { border: 6.500px solid transparent; border-top: 0; border-bottom: 7px solid #8b8b8b; }
.down { border: 6.500px solid transparent; border-bottom: 0; border-top: 7px solid #8b8b8b; margin-top: 18px; }
.thumb { width: 11px; height: 872px; margin-top: 10px; border-radius: 6px; background: #8b8b8b; }

/* Sidebar */
.sidebar { width: 54px; display: flex; flex-direction: column; align-items: center; padding-top: 1.5px; }
.sidebar span { height: 50.100px; flex: none; display: flex; align-items: center; }
.sidebar hr { width: 35px; height: 1px; margin: 15px 0 0; border: 0; background: #77787c; flex: none; }
.sidebar .add { height: 79px; }
.sidebar hr.lower { margin-top: 388px; }
.sidebar .gear { height: 56px; }

/* Taskbar */
.taskbar {
  height: 50px;
  display: flex;
  justify-content: space-between;
  background: linear-gradient(90deg, #2d2d2d, #1f1f1f 45%, #1c1c1c);
}
.apps { display: flex; }
.apps span { width: 62px; display: flex; align-items: center; justify-content: center; }
.apps .start { width: 60px; }
.apps span:nth-child(3) { margin-left: 3px; }
.apps .running { width: 51px; margin: 0 6px 0 5px; border-bottom: 3px solid #ff8fd4; padding-top: 3px; }
.apps .current { width: 61px; margin: 0 0 0 1px; background: #4c4c4c; }
.tray { width: 480px; display: flex; align-items: center; }
.weather { width: 230px; display: flex; align-items: center; font-size: 18px; white-space: nowrap; }
.temp { width: 47px; margin-left: 11px; letter-spacing: -0.7px; }
.cond { letter-spacing: -0.4px; }
.chevron { margin-top: -2px; }
.battery { margin-left: 11px; }
.lang, .clock { display: flex; flex-direction: column; font-size: 15px; line-height: 22px; text-align: right; }
.lang { width: 42px; letter-spacing: -0.6px; }
.clock { width: 86px; text-align: right; letter-spacing: -0.6px; margin-top: -2px; }
.clock span:first-child { padding-right: 18px; }
.notice { margin-left: 22px; }
.peek { width: 1px; height: 50px; margin-left: 25px; background: #6a6a6a; }
```
